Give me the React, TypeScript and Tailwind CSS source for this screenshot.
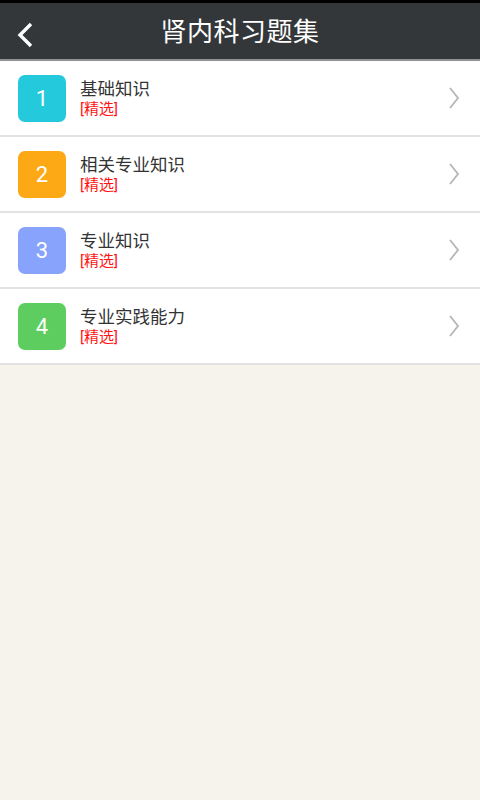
import React from "react";

const items = [
  { n: "1", title: "基础知识", color: "bg-[#25c9dc]" },
  { n: "2", title: "相关专业知识", color: "bg-[#fda815]" },
  { n: "3", title: "专业知识", color: "bg-[#87a3fc]" },
  { n: "4", title: "专业实践能力", color: "bg-[#5ccd5e]" },
];

const font = { fontFamily: '"Roboto", "Noto Sans CJK SC", sans-serif' };

export default function App() {
  return (
    <div className="w-[480px] h-[800px] bg-[#f6f3ec] flex flex-col" style={font}>
      {/* 상단 바 */}
      <div className="h-[3px] bg-black" />
      <div className="h-[58px] bg-[#33373a] relative flex items-center justify-center border-b-2 border-[#8f9293]">
        <button className="absolute left-[14px] top-[17px] w-[22px] h-[30px] flex items-center justify-center">
          <svg width="20" height="28" viewBox="0 0 20 28">
            <path d="M16 3 L5 14 L16 25" fill="none" stroke="white" strokeWidth="3.4" />
          </svg>
        </button>
        <h1 className="text-white text-[26px] tracking-[0.5px] mt-[2px]">肾内科习题集</h1>
      </div>

      {/* 목록 */}
      <div className="flex flex-col">
        {items.map((it) => (
          <div
            key={it.n}
            className="h-[76px] bg-white border-b-2 border-[#e2e2e2] flex items-center pl-[18px] pr-[20px]"
          >
            <div
              className={`w-[48px] h-[47px] rounded-[7px] ${it.color} flex items-center justify-center text-white text-[22px]`}
            >
              {it.n}
            </div>
            <div className="ml-[14px] flex-1 flex flex-col">
              <span className="text-[#333333] text-[17.5px] leading-[22px]">{it.title}</span>
              <span className="text-[#ff1414] text-[15px] leading-[19px]">[精选]</span>
            </div>
            <svg width="12" height="24" viewBox="0 0 12 24">
              <path d="M2 2 L10 12 L2 22" fill="none" stroke="#b5b5b5" strokeWidth="1.8" />
            </svg>
          </div>
        ))}
      </div>
    </div>
  );
}
